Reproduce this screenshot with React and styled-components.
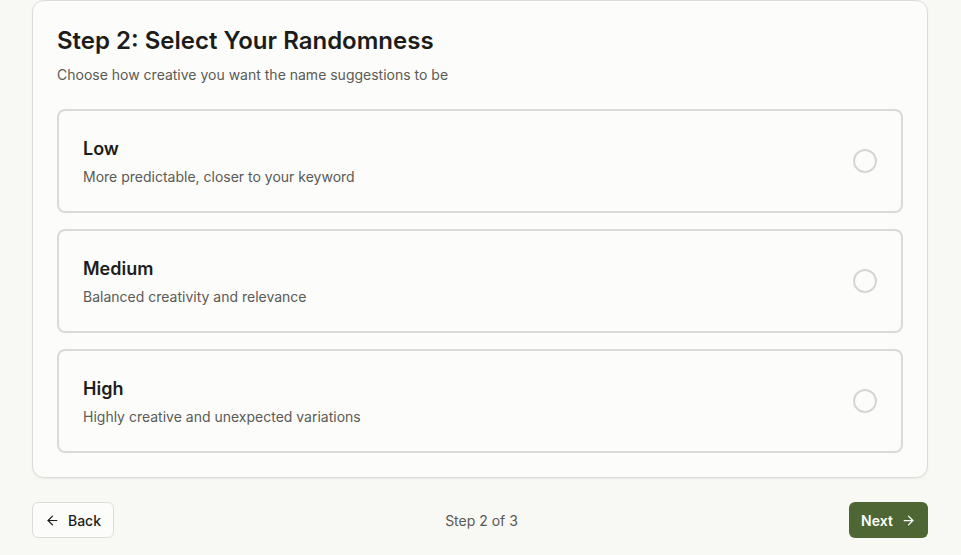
import React, { useState } from 'react';
import styled, { createGlobalStyle } from 'styled-components';
import { ArrowLeft, ArrowRight } from 'lucide-react';

const options = [
  { id: 'low', title: 'Low', desc: 'More predictable, closer to your keyword' },
  { id: 'medium', title: 'Medium', desc: 'Balanced creativity and relevance' },
  { id: 'high', title: 'High', desc: 'Highly creative and unexpected variations' },
];

const App = () => {
  const [selected, setSelected] = useState(null);

  return (
    <>
      <GlobalStyle />
      <Page>
        <Card>
          <Heading>Step 2: Select Your Randomness</Heading>
          <Subtitle>Choose how creative you want the name suggestions to be</Subtitle>
          <OptionList>
            {options.map((opt) => (
              <Option
                key={opt.id}
                $active={selected === opt.id}
                onClick={() => setSelected(opt.id)}
              >
                <OptionCopy>
                  <OptionTitle>{opt.title}</OptionTitle>
                  <OptionDesc>{opt.desc}</OptionDesc>
                </OptionCopy>
                <Radio $active={selected === opt.id} />
              </Option>
            ))}
          </OptionList>
        </Card>

        <Footer>
          <BackButton>
            <ArrowLeft size={15} strokeWidth={2} />
            Back
          </BackButton>
          <StepLabel>Step 2 of 3</StepLabel>
          <NextButton>
            Next
            <ArrowRight size={15} strokeWidth={2} />
          </NextButton>
        </Footer>
      </Page>
    </>
  );
};

export default App;

const GlobalStyle = createGlobalStyle`
  html, body {
    margin: 0;
    padding: 0;
    background: #f8f8f4;
    font-family: Inter, "Liberation Sans", Arial, sans-serif;
    color: #1c1c1a;
  }
  * { box-sizing: border-box; }
`;

const Page = styled.div`
  width: 896px;
  margin: 0 auto 0 32px;
  display: flex;
  flex-direction: column;
  gap: 24px;
`;

const Card = styled.div`
  background: #fcfcfa;
  border: 1px solid #dcdcd8;
  border-radius: 12px;
  padding: 24px;
  box-shadow: 0 1px 2px rgba(0, 0, 0, 0.06);
`;

const Heading = styled.h2`
  margin: 0;
  font-size: 24px;
  line-height: 32px;
  font-weight: 600;
  color: #1c1c1a;
`;

const Subtitle = styled.p`
  margin: 8px 0 0;
  font-size: 14px;
  line-height: 20px;
  color: #5a5a56;
`;

const OptionList = styled.div`
  margin-top: 24px;
  display: flex;
  flex-direction: column;
  gap: 16px;
`;

const Option = styled.div`
  display: flex;
  align-items: center;
  justify-content: space-between;
  padding: 24px;
  border: 2px solid ${(p) => (p.$active ? '#4d6633' : '#dadad6')};
  border-radius: 8px;
  background: #fcfcfa;
  cursor: pointer;
`;

const OptionCopy = styled.div`
  display: flex;
  flex-direction: column;
  gap: 4px;
`;

const OptionTitle = styled.div`
  font-size: 18px;
  line-height: 28px;
  font-weight: 600;
  color: #1c1c1a;
`;

const OptionDesc = styled.div`
  font-size: 14px;
  line-height: 20px;
  color: #5a5a56;
`;

const Radio = styled.span`
  width: 24px;
  height: 24px;
  border-radius: 50%;
  border: 2px solid ${(p) => (p.$active ? '#4d6633' : '#d6d6d3')};
  background: ${(p) => (p.$active ? '#4d6633' : 'transparent')};
  flex-shrink: 0;
`;

const Footer = styled.div`
  display: flex;
  align-items: center;
  justify-content: space-between;
`;

const ButtonBase = styled.button`
  display: inline-flex;
  align-items: center;
  justify-content: center;
  gap: 8px;
  height: 36px;
  padding: 0 12px;
  border-radius: 6px;
  font-family: Inter, "Liberation Sans", Arial, sans-serif;
  font-size: 14px;
  font-weight: 500;
  cursor: pointer;
`;

const BackButton = styled(ButtonBase)`
  width: 82px;
  background: #fcfcfa;
  border: 1px solid #dcdcd8;
  color: #1c1c1a;
`;

const NextButton = styled(ButtonBase)`
  width: 79px;
  background: #4d6633;
  border: none;
  color: #ffffff;
  font-weight: 600;
`;

const StepLabel = styled.span`
  font-size: 14px;
  color: #5a5a56;
`;
